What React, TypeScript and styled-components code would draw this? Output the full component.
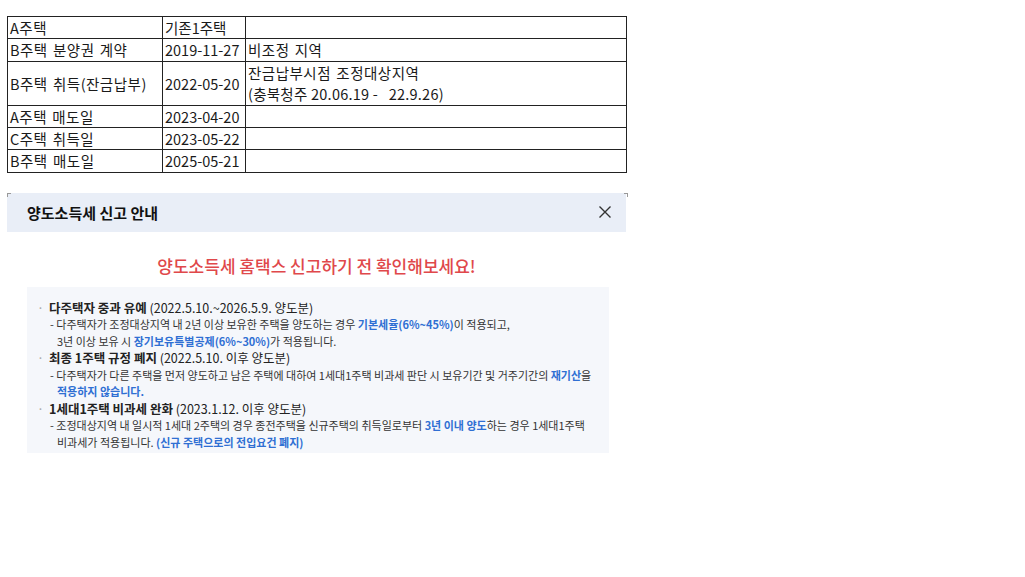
import React from "react";
import styled, { createGlobalStyle } from "styled-components";

const Global = createGlobalStyle`
  html, body { margin: 0; padding: 0; background: #fff; }
  body { font-family: "Noto Sans CJK KR", "Noto Sans", sans-serif; color: #111; }
`;

const Page = styled.div`
  width: 1025px;
  padding: 16px 0 0 7px;
  box-sizing: border-box;
`;

const Table = styled.table`
  border-collapse: collapse;
  width: 620px;
  table-layout: fixed;
  font-size: 14.5px;
  color: #1a1a1a;
`;

const Cell = styled.td<{ $w?: number; $text?: boolean }>`
  border: 1px solid #222;
  padding: 0 2px;
  height: 21.4px;
  line-height: 21.4px;
  vertical-align: middle;
  white-space: nowrap;
  letter-spacing: ${(p) => (p.$text ? "0.5px" : "0")};
  word-spacing: ${(p) => (p.$text ? "1.5px" : "0")};
  ${(p) => (p.$w ? `width: ${p.$w}px;` : "")}
`;

const Period = styled.span`
  letter-spacing: 0.25px;
  word-spacing: 0;
`;

const Modal = styled.section`
  width: 619px;
  margin-top: 20px;
  position: relative;
`;

const Header = styled.header`
  height: 39px;
  background: #e9eef7;
  display: flex;
  align-items: center;
  justify-content: space-between;
  padding: 0 12px 0 20px;
  box-sizing: border-box;
`;

const Title = styled.h2`
  margin: 0;
  font-size: 15px;
  font-weight: 700;
  color: #111;
`;

const Close = styled.button`
  border: 0;
  background: transparent;
  padding: 0;
  width: 18px;
  height: 18px;
  display: flex;
  align-items: center;
  justify-content: center;
  cursor: pointer;
`;

const Corner = styled.span<{ $right?: boolean }>`
  position: absolute;
  top: 0;
  ${(p) => (p.$right ? "right: -2px;" : "left: 0;")}
  width: 3px;
  height: 3px;
  border-top: 1px solid #999;
  ${(p) => (p.$right ? "border-right: 1px solid #999;" : "border-left: 1px solid #999;")}
`;

const Lead = styled.p`
  margin: 22px 0 0;
  text-align: center;
  font-size: 17px;
  font-weight: 500;
  color: #e0484b;
  line-height: 24px;
`;

const Box = styled.div`
  margin: 9px 0 0 20px;
  width: 582px;
  background: #f5f7fb;
  padding: 13px 0 2px 10px;
  box-sizing: border-box;
  font-size: 11px;
  line-height: 16.5px;
  color: #333;
`;

const Item = styled.div`
  margin-bottom: 1px;
`;

const Head = styled.div`
  display: flex;
  gap: 5px;
  font-size: 12.5px;
  color: #222;
`;

const Dot = styled.span`
  color: #aaa;
`;

const Strong = styled.b`
  font-weight: 700;
`;

const Desc = styled.div`
  padding-left: 8px;
  text-indent: -7px;
  margin-left: 12px;
`;

const Blue = styled.b`
  color: #2f6fd3;
  font-weight: 700;
`;

export default function App() {
  const rows: [string, string, React.ReactNode][] = [
    ["A주택", "기존1주택", ""],
    ["B주택 분양권 계약", "2019-11-27", "비조정 지역"],
    [
      "B주택 취득(잔금납부)",
      "2022-05-20",
      <>
        잔금납부시점 조정대상지역
        <br />
        <Period>(충북청주 20.06.19 -&nbsp;&nbsp; 22.9.26)</Period>
      </>,
    ],
    ["A주택 매도일", "2023-04-20", ""],
    ["C주택 취득일", "2023-05-22", ""],
    ["B주택 매도일", "2025-05-21", ""],
  ];
  return (
    <Page>
      <Global />
      <Table>
        <tbody>
          {rows.map((r, i) => (
            <tr key={i}>
              <Cell $w={150} $text>
                {r[0]}
              </Cell>
              <Cell $w={78}>{r[1]}</Cell>
              <Cell $text>{r[2]}</Cell>
            </tr>
          ))}
        </tbody>
      </Table>
      <Modal>
        <Corner />
        <Corner $right />
        <Header>
          <Title>양도소득세 신고 안내</Title>
          <Close aria-label="닫기">
            <svg width="16" height="16" viewBox="0 0 16 16">
              <path d="M2.5 2.5 L13.5 13.5 M13.5 2.5 L2.5 13.5" stroke="#333" strokeWidth="1.4" />
            </svg>
          </Close>
        </Header>
        <Lead>양도소득세 홈택스 신고하기 전 확인해보세요!</Lead>
        <Box>
          <Item>
            <Head>
              <Dot>·</Dot>
              <span>
                <Strong>다주택자 중과 유예</Strong> (2022.5.10.~2026.5.9. 양도분)
              </span>
            </Head>
            <Desc>
              - 다주택자가 조정대상지역 내 2년 이상 보유한 주택을 양도하는 경우 <Blue>기본세율(6%~45%)</Blue>이 적용되고,
              <br />
              3년 이상 보유 시 <Blue>장기보유특별공제(6%~30%)</Blue>가 적용됩니다.
            </Desc>
          </Item>
          <Item>
            <Head>
              <Dot>·</Dot>
              <span>
                <Strong>최종 1주택 규정 폐지</Strong> (2022.5.10. 이후 양도분)
              </span>
            </Head>
            <Desc>
              - 다주택자가 다른 주택을 먼저 양도하고 남은 주택에 대하여 1세대1주택 비과세 판단 시 보유기간 및 거주기간의 <Blue>재기산</Blue>을
              <br />
              <Blue>적용하지 않습니다.</Blue>
            </Desc>
          </Item>
          <Item>
            <Head>
              <Dot>·</Dot>
              <span>
                <Strong>1세대1주택 비과세 완화</Strong> (2023.1.12. 이후 양도분)
              </span>
            </Head>
            <Desc>
              - 조정대상지역 내 일시적 1세대 2주택의 경우 종전주택을 신규주택의 취득일로부터 <Blue>3년 이내 양도</Blue>하는 경우 1세대1주택
              <br />
              비과세가 적용됩니다. <Blue>(신규 주택으로의 전입요건 폐지)</Blue>
            </Desc>
          </Item>
        </Box>
      </Modal>
    </Page>
  );
}
